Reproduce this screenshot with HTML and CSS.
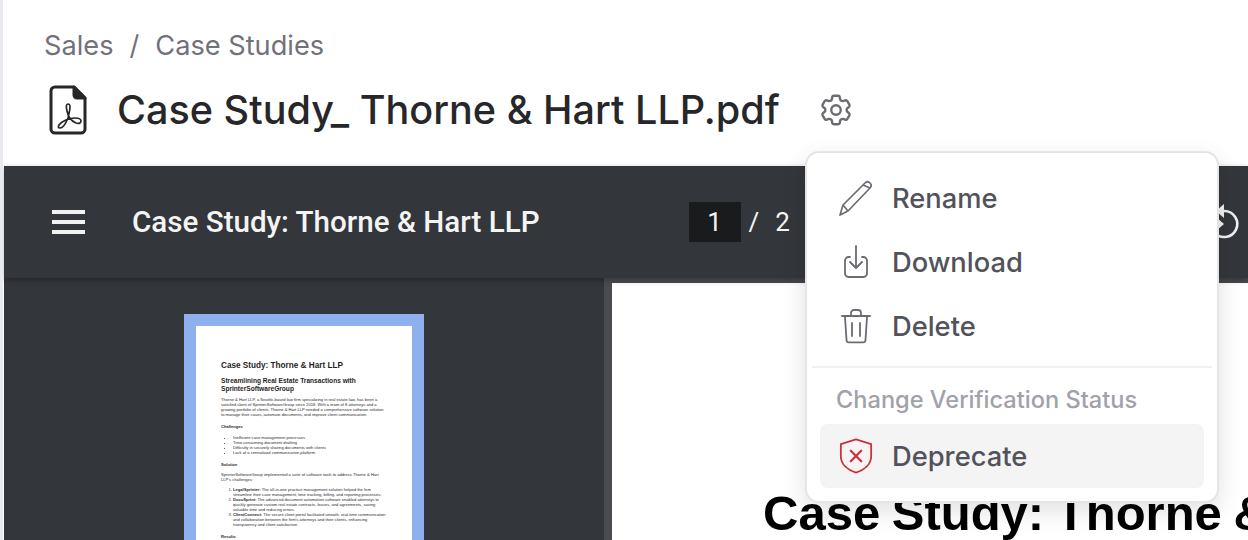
FILE: index.html
```html
<!DOCTYPE html>
<html lang="en">
<head>
  <meta charset="UTF-8">
  <title>Case Study_ Thorne &amp; Hart LLP.pdf</title>
  <link rel="stylesheet" href="styles.css">
</head>
<body>
  <div class="app">
    <header class="page-head">
      <div class="crumbs">
        <span>Sales</span>
        <span class="crumb-sep">/</span>
        <span>Case Studies</span>
      </div>
      <div class="title-row">
        <svg class="file-icon" viewBox="0 0 38 50" fill="none" stroke="#27272a" stroke-width="3" stroke-linejoin="round">
          <path d="M8 2h17l11 11v31a4 4 0 0 1-4 4H6a4 4 0 0 1-4-4V6a4 4 0 0 1 4-4z"/>
          <path d="M25 2v8a3 3 0 0 0 3 3h8z" fill="#27272a"/>
          <path stroke-width="1.700" d="M19 19c-2 0-2 3-1 7 1 5 4 10 9 12 3 1 5 0 5-2s-3-3-6-3c-6 0-13 3-16 7-1 2-1 3 1 3 3 0 6-5 8-10 1-4 2-8 2-11 0-2 0-3-2-3z"/>
        </svg>
        <h1 class="doc-title">Case Study_ Thorne &amp; Hart LLP.pdf</h1>
        <svg class="gear-icon" viewBox="0 0 24 24" fill="none" stroke="#6b6b76" stroke-width="1.5" stroke-linecap="round" stroke-linejoin="round">
          <path d="M9.594 3.94c.09-.542.56-.94 1.11-.94h2.593c.55 0 1.02.398 1.11.94l.213 1.281c.063.374.313.686.645.87.074.04.147.083.22.127.325.196.72.257 1.075.124l1.217-.456a1.125 1.125 0 0 1 1.37.49l1.296 2.247a1.125 1.125 0 0 1-.26 1.431l-1.003.827c-.293.241-.438.613-.43.992a7.723 7.723 0 0 1 0 .255c-.008.378.137.75.43.991l1.004.827c.424.35.534.955.26 1.43l-1.298 2.247a1.125 1.125 0 0 1-1.369.491l-1.217-.456c-.355-.133-.75-.072-1.076.124a6.47 6.47 0 0 1-.22.128c-.331.183-.581.495-.644.869l-.213 1.281c-.09.543-.56.94-1.11.94h-2.594c-.55 0-1.019-.398-1.11-.94l-.213-1.281c-.062-.374-.312-.686-.644-.87a6.52 6.52 0 0 1-.22-.127c-.325-.196-.72-.257-1.076-.124l-1.217.456a1.125 1.125 0 0 1-1.369-.49l-1.297-2.247a1.125 1.125 0 0 1 .26-1.431l1.004-.827c.292-.24.437-.613.43-.991a6.932 6.932 0 0 1 0-.255c.007-.38-.138-.751-.43-.992l-1.004-.827a1.125 1.125 0 0 1-.26-1.43l1.297-2.247a1.125 1.125 0 0 1 1.37-.491l1.216.456c.356.133.751.072 1.076-.124.072-.044.146-.086.22-.128.332-.183.582-.495.644-.869l.214-1.28Z"/>
          <path d="M15 12a3 3 0 1 1-6 0 3 3 0 0 1 6 0Z"/>
        </svg>
      </div>
    </header>

    <section class="viewer">
      <div class="toolbar">
        <div class="burger"><i></i><i></i><i></i></div>
        <div class="tb-title">Case Study: Thorne &amp; Hart LLP</div>
        <div class="pager">
          <span class="page-box">1</span>
          <span class="page-sep">/</span>
          <span>2</span>
        </div>
        <svg class="rotate-icon" viewBox="0 0 40 40" fill="none" stroke="#f1f1f1" stroke-width="2.600">
          <path d="M20 8a13 13 0 1 1-10 21"/>
          <path d="M20 1l-8 7 8 7z" fill="#f1f1f1" stroke="none"/>
          <path d="M12 14l8 7-8 7-8-7z" fill="#f1f1f1" stroke="none"/>
        </svg>
      </div>
      <div class="viewer-body">
        <aside class="thumbs">
          <div class="thumb">
            <div class="thumb-page">
              <div class="t-h1">Case Study: Thorne &amp; Hart LLP</div>
              <div class="t-h2">Streamlining Real Estate Transactions with SprinterSoftwareGroup</div>
              <p>Thorne &amp; Hart LLP, a Seattle-based law firm specializing in real estate law, has been a satisfied client of SprinterSoftwareGroup since 2018. With a team of 8 attorneys and a growing portfolio of clients, Thorne &amp; Hart LLP needed a comprehensive software solution to manage their cases, automate documents, and improve client communication.</p>
              <div class="t-h3">Challenges</div>
              <ul>
                <li>Inefficient case management processes</li>
                <li>Time-consuming document drafting</li>
                <li>Difficulty in securely sharing documents with clients</li>
                <li>Lack of a centralized communication platform</li>
              </ul>
              <div class="t-h3">Solution</div>
              <p>SprinterSoftwareGroup implemented a suite of software tools to address Thorne &amp; Hart LLP's challenges:</p>
              <ol>
                <li><b>LegalSprinter:</b> The all-in-one practice management solution helped the firm streamline their case management, time tracking, billing, and reporting processes.</li>
                <li><b>DocuSprint:</b> The advanced document automation software enabled attorneys to quickly generate custom real estate contracts, leases, and agreements, saving valuable time and reducing errors.</li>
                <li><b>ClientConnect:</b> The secure client portal facilitated smooth, real-time communication and collaboration between the firm's attorneys and their clients, enhancing transparency and client satisfaction.</li>
              </ol>
              <div class="t-h3">Results</div>
            </div>
          </div>
        </aside>
        <div class="content">
          <div class="pdf-page">
            <div class="pdf-title">Case Study: Thorne &amp; Hart LLP</div>
          </div>
        </div>
      </div>
    </section>

    <div class="menu">
      <div class="menu-item">
        <svg class="menu-icon" viewBox="0 0 36 36" fill="none" stroke="#6b6b76" stroke-width="1.700" stroke-linejoin="round">
          <path d="M2 35l3-10L27 3c1.500-1.500 3.500-1.500 5 0s1.500 3.500 0 5L10 31z"/>
          <path d="M25 5l7 3M5 25l5 6"/>
        </svg>
        <span>Rename</span>
      </div>
      <div class="menu-item">
        <svg class="menu-icon" viewBox="0 0 36 36" fill="none" stroke="#6b6b76" stroke-width="1.800" stroke-linecap="round" stroke-linejoin="round">
          <path d="M12 13h-1.500A3.500 3.500 0 0 0 7 16.500v13a3.500 3.500 0 0 0 3.500 3.500h15a3.500 3.500 0 0 0 3.500-3.500v-13a3.500 3.500 0 0 0-3.500-3.500H24"/>
          <path d="M18 2v21M12 18l6 6 6-6"/>
        </svg>
        <span>Download</span>
      </div>
      <div class="menu-item">
        <svg class="menu-icon" viewBox="0 0 36 36" fill="none" stroke="#6b6b76" stroke-width="1.800" stroke-linecap="round" stroke-linejoin="round">
          <path d="M4 8h28M13 7V5a3 3 0 0 1 3-3h4a3 3 0 0 1 3 3v2"/>
          <path d="M7 9l1.500 23a2.500 2.500 0 0 0 2.500 2.400h14a2.500 2.500 0 0 0 2.500-2.400L29 9"/>
          <path d="M14 15v13M22 15v13"/>
        </svg>
        <span>Delete</span>
      </div>
      <div class="menu-divider"></div>
      <div class="menu-label">Change Verification Status</div>
      <div class="menu-item active">
        <svg class="menu-icon" viewBox="0 0 36 38" fill="none" stroke="#c8323c" stroke-width="1.900" stroke-linecap="round" stroke-linejoin="round">
          <path d="M18 1.500l16 5v13c0 8-7 14-16 17-9-3-16-9-16-17v-13z"/>
          <path d="M12.500 13.500l11 11M23.500 13.500l-11 11" stroke-width="2.400"/>
        </svg>
        <span>Deprecate</span>
      </div>
    </div>
  </div>
</body>
</html>
```

FILE: styles.css
```css
* {
  box-sizing: border-box;
}
html, body {
  margin: 0;
  height: 100%;
  overflow: hidden;
  background: #fff;
}
.app {
  position: relative;
  height: 540px;
  padding-left: 1px;
  border-left: 3px solid #e9e9f0;
  font-family: Inter, "Noto Sans", sans-serif;
  overflow: hidden;
}
.page-head {
  height: 166px;
  padding: 29px 0 0 40px;
}
.crumbs {
  display: flex;
  gap: 16px;
  font-size: 27.200px;
  line-height: 34px;
  color: #71717a;
}
.title-row {
  display: flex;
  align-items: center;
  margin-top: 22px;
}
.file-icon {
  width: 38px;
  height: 50px;
  margin-left: 5px;
}
.doc-title {
  margin: 0 0 0 30px;
  font-size: 39.600px;
  line-height: 50px;
  font-weight: 500;
  color: #27272a;
}
.gear-icon {
  width: 38px;
  height: 38px;
  margin-left: 37px;
}

.viewer {
  height: 374px;
  background: #4a4c50;
}
.toolbar {
  position: relative;
  z-index: 1;
  display: flex;
  align-items: center;
  height: 112px;
  padding-left: 48px;
  background: #33363a;
  box-shadow: 0 2px 6px rgba(0, 0, 0, 0.3);
  font-family: Roboto, sans-serif;
  color: #f4f4f4;
}
.burger {
  display: flex;
  flex-direction: column;
  gap: 6px;
  width: 33px;
}
.burger i {
  display: block;
  height: 4px;
  background: #f1f1f1;
}
.tb-title {
  margin-left: 47px;
  font-size: 29.600px;
  font-weight: 500;
}
.pager {
  display: flex;
  align-items: center;
  margin-left: 149px;
  font-size: 26px;
}
.page-box {
  width: 52px;
  height: 40px;
  line-height: 40px;
  text-align: center;
  background: #191b1c;
}
.page-sep {
  margin: 0 16px 0 8px;
}
.rotate-icon {
  position: absolute;
  left: 1200px;
  top: 37px;
  width: 40px;
  height: 40px;
}

.viewer-body {
  display: flex;
  height: 262px;
}
.thumbs {
  width: 600px;
  flex: none;
  padding: 36px 0 0 180px;
  background: #33363a;
}
.thumb {
  width: 240px;
  height: 300px;
  padding: 12px;
  background: #8fb0ee;
}
.thumb-page {
  height: 300px;
  padding: 35px 26px 0 25px;
  background: #fff;
  font-family: "Liberation Sans", Arial, sans-serif;
  font-size: 4.100px;
  line-height: 5px;
  color: #2a2a2a;
}
.t-h1 {
  font-size: 8.200px;
  line-height: 10px;
  font-weight: 700;
  color: #1f1f1f;
}
.t-h2 {
  margin-top: 6px;
  font-size: 6.600px;
  line-height: 8px;
  font-weight: 700;
  color: #1f1f1f;
}
.t-h3 {
  margin-top: 7px;
  font-weight: 700;
  line-height: 6px;
}
.thumb-page p {
  margin: 4px 0 0;
}
.thumb-page ul,
.thumb-page ol {
  margin: 5px 0 0;
  padding-left: 12px;
}

.content {
  flex: 1;
  padding: 5px 0 0 8px;
}
.pdf-page {
  height: 300px;
  padding: 202px 0 0 151px;
  background: #fff;
}
.pdf-title {
  font-family: "Liberation Sans", Arial, sans-serif;
  font-size: 49px;
  line-height: 56px;
  font-weight: 700;
  color: #000;
  white-space: nowrap;
  word-spacing: -2px;
}

.menu {
  position: absolute;
  left: 802px;
  top: 151px;
  z-index: 5;
  width: 414px;
  height: 352px;
  padding: 13px;
  background: #fff;
  border: 2px solid #e5e5e5;
  border-radius: 14px;
  box-shadow: 0 8px 24px rgba(0, 0, 0, 0.12);
  color: #52525b;
  font-size: 27.300px;
}
.menu-item {
  display: flex;
  align-items: center;
  gap: 18px;
  height: 64px;
  padding-left: 18px;
  border-radius: 8px;
}
.menu-item span {
  font-weight: 500;
}
.menu-item.active {
  background: #f4f4f5;
}
.menu-icon {
  width: 36px;
  height: 36px;
  flex: none;
}
.menu-divider {
  height: 2px;
  margin: 8px -8px 0;
  background: #f1f1f2;
}
.menu-label {
  height: 56px;
  padding-left: 16px;
  line-height: 64px;
  font-size: 23.600px;
  font-weight: 500;
  color: #a1a1aa;
}
```
